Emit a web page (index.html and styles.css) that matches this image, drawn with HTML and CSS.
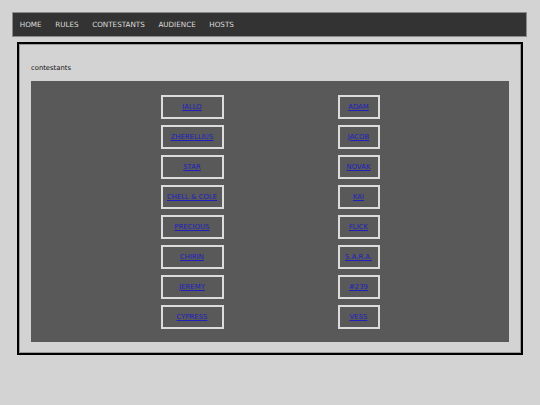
FILE: index.html
```html
<!DOCTYPE html>
<html>
<head>
<meta charset="utf-8">
<link rel="stylesheet" href="styles.css">
</head>
<body>
<nav class="nav">
  <a class="nav-link" href="#">HOME</a>
  <a class="nav-link" href="#">RULES</a>
  <a class="nav-link" href="#">CONTESTANTS</a>
  <a class="nav-link" href="#">AUDIENCE</a>
  <a class="nav-link" href="#">HOSTS</a>
</nav>
<main class="main">
  <p class="title">contestants</p>
  <div class="panel">
    <div class="col col-left">
      <div class="box"><a href="#">IALLO</a></div>
      <div class="box"><a href="#">ZHERELLIUS</a></div>
      <div class="box"><a href="#">STAR</a></div>
      <div class="box"><a href="#">CHELL &amp; COLE</a></div>
      <div class="box"><a href="#">PRECIOUS</a></div>
      <div class="box"><a href="#">CHIRIN</a></div>
      <div class="box"><a href="#">JEREMY</a></div>
      <div class="box"><a href="#">CYPRESS</a></div>
    </div>
    <div class="col col-right">
      <div class="box"><a href="#">ADAM</a></div>
      <div class="box"><a href="#">JACOB</a></div>
      <div class="box"><a href="#">NOVAK</a></div>
      <div class="box"><a href="#">KAI</a></div>
      <div class="box"><a href="#">FLICK</a></div>
      <div class="box"><a href="#">S.A.R.A.</a></div>
      <div class="box"><a href="#">#239</a></div>
      <div class="box"><a href="#">VESS</a></div>
    </div>
  </div>
</main>
</body>
</html>
```
FILE: styles.css
```css
html, body {
  background: #d3d3d3;
}
body {
  margin: 12px 13px 12px 12px;
  font-family: "DejaVu Sans", Verdana, sans-serif;
}
.nav {
  display: flex;
  align-items: center;
  height: 23px;
  background: #333333;
  border: 1px solid #8a8a8a;
}
.nav-link {
  color: #dedede;
  text-decoration: none;
  font-size: 7.2px;
  padding: 0 6.8px;
  line-height: 1;
}
.main {
  margin: 5px 4px 0 5px;
  border: 2px solid #000;
  box-shadow: inset 0 0 0 1px #9a9a9a;
  padding: 0 12px 11px 12px;
}
.title {
  margin: 20px 0 9px 0;
  font-size: 6.8px;
  line-height: 8px;
  color: #111;
}
.panel {
  background: #595959;
  display: flex;
  justify-content: center;
  gap: 114px;
  padding: 14px 0 13px 0;
}
.col {
  display: flex;
  flex-direction: column;
  gap: 6px;
}
.col-left {
  width: 63px;
}
.col-right {
  width: 42px;
}
.box {
  box-sizing: border-box;
  height: 24px;
  border: 2px solid #dcdcdc;
  display: flex;
  align-items: center;
  justify-content: center;
}
.box a {
  color: #2020c0;
  font-size: 6.9px;
  line-height: 1;
  white-space: nowrap;
}
```
